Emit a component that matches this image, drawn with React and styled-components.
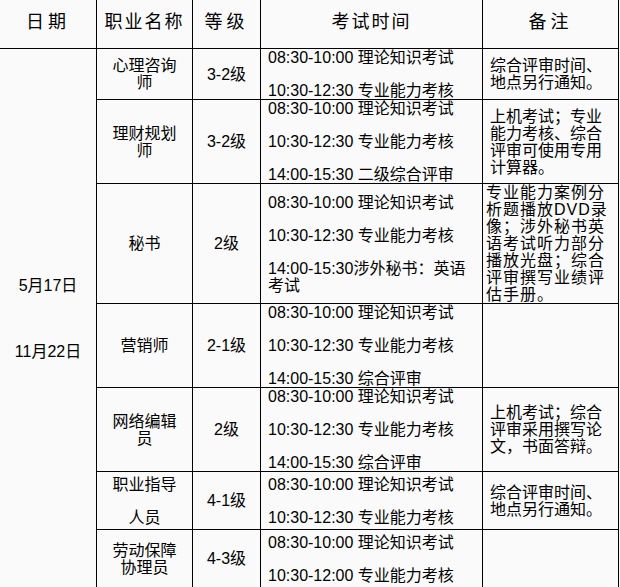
import React from "react";
import styled, { createGlobalStyle } from "styled-components";

const rows = [
  {
    name: ["心理咨询师"],
    grade: "3-2级",
    times: ["08:30-10:00 理论知识考试", "10:30-12:30 专业能力考核"],
    note: "综合评审时间、地点另行通知。",
    height: 50,
  },
  {
    name: ["理财规划师"],
    grade: "3-2级",
    times: ["08:30-10:00 理论知识考试", "10:30-12:30 专业能力考核", "14:00-15:30 二级综合评审"],
    note: "上机考试；专业能力考核、综合评审可使用专用计算器。",
    height: 83,
  },
  {
    name: ["秘书"],
    grade: "2级",
    times: ["08:30-10:00 理论知识考试", "10:30-12:30 专业能力考核", "14:00-15:30涉外秘书：英语考试"],
    note: "专业能力案例分析题播放DVD录像；涉外秘书英语考试听力部分播放光盘；综合评审撰写业绩评估手册。",
    tight: true,
    height: 119,
  },
  {
    name: ["营销师"],
    grade: "2-1级",
    times: ["08:30-10:00 理论知识考试", "10:30-12:30 专业能力考核", "14:00-15:30 综合评审"],
    note: "",
    height: 83,
  },
  {
    name: ["网络编辑员"],
    grade: "2级",
    times: ["08:30-10:00 理论知识考试", "10:30-12:30 专业能力考核", "14:00-15:30 综合评审"],
    note: "上机考试；综合评审采用撰写论文，书面答辩。",
    height: 83,
  },
  {
    name: ["职业指导", "人员"],
    grade: "4-1级",
    times: ["08:30-10:00 理论知识考试", "10:30-12:30 专业能力考核"],
    note: "综合评审时间、地点另行通知。",
    height: 57,
  },
  {
    name: ["劳动保障协理员"],
    grade: "4-3级",
    times: ["08:30-10:00 理论知识考试", "10:30-12:00 专业能力考核"],
    note: "",
    height: 57,
  },
];

const headers = ["日期", "职业名称", "等级", "考试时间", "备注"];

const App = () => {
  return (
    <>
      <GlobalStyle />
      <Schedule $rows={rows.map((r) => r.height)}>
        {headers.map((h) => (
          <HeadCell key={h} $wide={h.length === 2}>
            {h}
          </HeadCell>
        ))}
        <DateCell $span={rows.length}>
          <Line>5月17日</Line>
          <Line>11月22日</Line>
        </DateCell>
        {rows.map((row, i) => (
          <React.Fragment key={i}>
            <NameCell>
              {row.name.map((n) => (
                <Line key={n}>{n}</Line>
              ))}
            </NameCell>
            <GradeCell>{row.grade}</GradeCell>
            <TimeCell>
              {row.times.map((t) => (
                <Line key={t}>{t}</Line>
              ))}
            </TimeCell>
            <NoteCell $tight={row.tight}>{row.note}</NoteCell>
          </React.Fragment>
        ))}
      </Schedule>
    </>
  );
};

export default App;

const GlobalStyle = createGlobalStyle`
  html, body {
    margin: 0;
    padding: 0;
    background: #fafafa;
  }
  body {
    font-family: "Liberation Sans", "Noto Sans CJK SC", sans-serif;
    font-size: 16px;
    line-height: 17px;
    color: #000;
  }
`;

const Schedule = styled.div`
  display: grid;
  width: fit-content;
  grid-template-columns: 96px 95px 67px 221px 135px;
  grid-template-rows: 48px ${({ $rows }) => $rows.map((h) => `${h}px`).join(" ")};
  gap: 1px;
  padding-right: 1px;
  background: #000;
`;

const Cell = styled.div`
  background: #fafafa;
  display: flex;
  flex-direction: column;
  justify-content: center;
  min-width: 0;
  padding: 0 7px;
`;

const Line = styled.p`
  margin: 0;
`;

const HeadCell = styled(Cell)`
  align-items: center;
  padding-bottom: 4px;
  font-size: 18px;
  line-height: 20px;
  letter-spacing: ${({ $wide }) => ($wide ? "4px" : "2px")};
`;

const DateCell = styled(Cell)`
  grid-row: span ${({ $span }) => $span};
  align-items: center;
  gap: 49px;
`;

const NameCell = styled(Cell)`
  padding: 0 9px;
  text-align: center;
  gap: 16px;
`;

const GradeCell = styled(Cell)`
  align-items: center;
`;

const TimeCell = styled(Cell)`
  gap: 16px;
`;

const NoteCell = styled(Cell)`
  padding: ${({ $tight }) => ($tight ? "0 3px" : "0 7px")};
  letter-spacing: ${({ $tight }) => ($tight ? "1px" : "0")};
`;
